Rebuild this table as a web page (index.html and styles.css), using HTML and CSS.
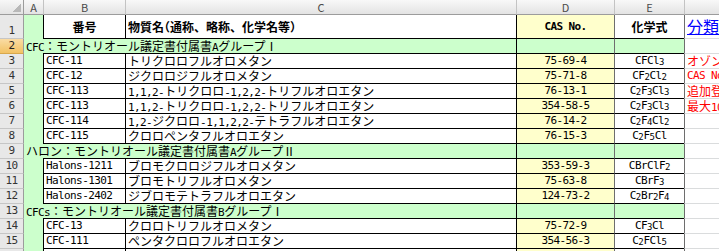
FILE: index.html
```html
<!DOCTYPE html>
<html lang="ja">
<head>
<meta charset="utf-8">
<title>Sheet</title>
<link rel="stylesheet" href="styles.css">
</head>
<body>
<div class="sheet">
  <div class="corner"></div><div class="ch cha">A</div><div class="ch">B</div><div class="ch">C</div><div class="ch">D</div><div class="ch">E</div><div class="ch">F</div>

  <div class="rh rh1">1</div><div class="a"></div><div class="b r1 hd">番号</div><div class="c r1 hd">物質名<span class="p">（</span>通称、略称、化学名等<span class="p">）</span></div><div class="d r1 hd h">CAS No.</div><div class="e r1 hd">化学式</div><div class="f r1"><span class="link">分類</span></div>

  <div class="rh act">2</div><div class="grp"><span class="h">CFC</span>：モントリオール議定書付属書<span class="h">A</span>グループⅠ</div><div class="d g"></div><div class="e g"></div><div class="f"></div>

  <div class="rh">3</div><div class="a"></div><div class="b h">CFC-11</div><div class="c">トリクロロフルオロメタン</div><div class="d h">75-69-4</div><div class="e h">CFCl<span class="s">3</span></div><div class="f red">オゾン</div>

  <div class="rh">4</div><div class="a"></div><div class="b h">CFC-12</div><div class="c">ジクロロジフルオロメタン</div><div class="d h">75-71-8</div><div class="e h">CF<span class="s">2</span>Cl<span class="s">2</span></div><div class="f red h">CAS No</div>

  <div class="rh">5</div><div class="a"></div><div class="b h">CFC-113</div><div class="c"><span class="h">1,1,2-</span>トリクロロ<span class="h">-1,2,2-</span>トリフルオロエタン</div><div class="d h">76-13-1</div><div class="e h">C<span class="s">2</span>F<span class="s">3</span>Cl<span class="s">3</span></div><div class="f red">追加登</div>

  <div class="rh">6</div><div class="a"></div><div class="b h">CFC-113</div><div class="c"><span class="h">1,1,2-</span>トリクロロ<span class="h">-1,2,2-</span>トリフルオロエタン</div><div class="d h">354-58-5</div><div class="e h">C<span class="s">2</span>F<span class="s">3</span>Cl<span class="s">3</span></div><div class="f red">最大<span class="h">10</span></div>

  <div class="rh">7</div><div class="a"></div><div class="b h">CFC-114</div><div class="c"><span class="h">1,2-</span>ジクロロ<span class="h">-1,1,2,2-</span>テトラフルオロエタン</div><div class="d h">76-14-2</div><div class="e h">C<span class="s">2</span>F<span class="s">4</span>Cl<span class="s">2</span></div><div class="f"></div>

  <div class="rh">8</div><div class="a"></div><div class="b h">CFC-115</div><div class="c">クロロペンタフルオロエタン</div><div class="d h">76-15-3</div><div class="e h">C<span class="s">2</span>F<span class="s">5</span>Cl</div><div class="f"></div>

  <div class="rh">9</div><div class="grp">ハロン：モントリオール議定書付属書<span class="h">A</span>グループⅡ</div><div class="d g"></div><div class="e g"></div><div class="f"></div>

  <div class="rh">10</div><div class="a"></div><div class="b h">Halons-1211</div><div class="c">ブロモクロロジフルオロメタン</div><div class="d h">353-59-3</div><div class="e h">CBrClF<span class="s">2</span></div><div class="f"></div>

  <div class="rh">11</div><div class="a"></div><div class="b h">Halons-1301</div><div class="c">ブロモトリフルオロメタン</div><div class="d h">75-63-8</div><div class="e h">CBrF<span class="s">3</span></div><div class="f"></div>

  <div class="rh">12</div><div class="a"></div><div class="b h">Halons-2402</div><div class="c">ジブロモテトラフルオロエタン</div><div class="d h">124-73-2</div><div class="e h">C<span class="s">2</span>Br<span class="s">2</span>F<span class="s">4</span></div><div class="f"></div>

  <div class="rh">13</div><div class="grp"><span class="h">CFCs</span>：モントリオール議定書付属書<span class="h">B</span>グループⅠ</div><div class="d g"></div><div class="e g"></div><div class="f"></div>

  <div class="rh">14</div><div class="a"></div><div class="b h">CFC-13</div><div class="c">クロロトリフルオロメタン</div><div class="d h">75-72-9</div><div class="e h">CF<span class="s">3</span>Cl</div><div class="f"></div>

  <div class="rh">15</div><div class="a"></div><div class="b h">CFC-111</div><div class="c">ペンタクロロフルオロエタン</div><div class="d h">354-56-3</div><div class="e h">C<span class="s">2</span>FCl<span class="s">5</span></div><div class="f"></div>

  <div class="rh">16</div><div class="a"></div><div class="b"></div><div class="c"></div><div class="d"></div><div class="e"></div><div class="f"></div>
</div>
</body>
</html>
```

FILE: styles.css
```css
html, body {
  margin: 0;
  padding: 0;
}
body {
  width: 719px;
  height: 251px;
  overflow: hidden;
  background: #ffffff;
  font-family: "Noto Sans CJK JP", sans-serif;
  font-size: 12px;
  color: #000000;
}
.sheet {
  display: grid;
  grid-template-columns: 24px 19px 82px 391px 98px 70px 120px;
  grid-template-rows: 15px 24px repeat(16, 15px);
}
.sheet > div {
  box-sizing: border-box;
  white-space: nowrap;
  line-height: 14px;
}

/* headers */
.corner {
  background:
    linear-gradient(to bottom right, transparent 50%, #b8b8b8 50%) no-repeat right 2px bottom 2px / 8px 8px,
    linear-gradient(#f7f7f7, #e3e3e3);
  border-right: 1px solid #9c9c9c;
  border-bottom: 1px solid #9c9c9c;
}
.ch {
  background: linear-gradient(#f8f8f8, #e3e3e3);
  border-left: 1px solid #c3c3c3;
  border-bottom: 1px solid #9c9c9c;
  text-align: center;
  font-size: 11px;
  color: #4a4a4a;
}
.ch.cha {
  border-left: 0;
}
.rh {
  background: #e8e8e8;
  border-right: 1px solid #9c9c9c;
  border-bottom: 1px solid #c6c6c6;
  text-align: center;
  font-family: "DejaVu Sans Mono", monospace;
  font-size: 11px;
  letter-spacing: -0.6px;
  color: #333333;
}
.rh.rh1 {
  padding-top: 9px;
}
.rh.act {
  background: linear-gradient(#fadca4, #f2c264);
  border-bottom-color: #d8a84c;
  color: #222222;
}

/* cells */
.a {
  background: #ccffcc;
}
.grp {
  grid-column: 2 / 5;
  padding-left: 2px;
  background:
    linear-gradient(#000000, #000000) no-repeat right bottom / calc(100% - 19px) 1px,
    #ccffcc;
}
.b {
  border-left: 1px solid #000000;
  border-bottom: 1px solid #000000;
  padding-left: 2px;
}
.c {
  border-left: 1px solid #000000;
  border-bottom: 1px solid #000000;
  padding-left: 2px;
}
.d {
  background: #ffffcc;
  border-left: 1px solid #000000;
  border-bottom: 1px solid #000000;
  text-align: center;
}
.e {
  border-left: 1px solid #6e6e6e;
  border-bottom: 1px solid #000000;
  text-align: center;
}
.f {
  border-left: 1px solid #6e6e6e;
  border-bottom: 1px solid #dadcdd;
  padding-left: 2px;
}
.g {
  background: #ccffcc;
}

/* row 1 */
.r1 {
  line-height: 23px !important;
}
.hd {
  font-weight: bold;
}
.b.hd, .d.hd, .e.hd {
  text-align: center;
  padding-left: 0;
}
.p {
  font-feature-settings: "halt";
}
.link {
  font-size: 16px;
  color: #0000ff;
  text-decoration: underline;
}

/* text styles */
.h {
  font-family: "DejaVu Sans Mono", "Noto Sans CJK JP", monospace;
  font-size: 11px;
  letter-spacing: -0.6px;
}
.s {
  font-size: 9px;
  letter-spacing: -0.3px;
  vertical-align: -1px;
}
.red {
  color: #ff0000;
}
```
